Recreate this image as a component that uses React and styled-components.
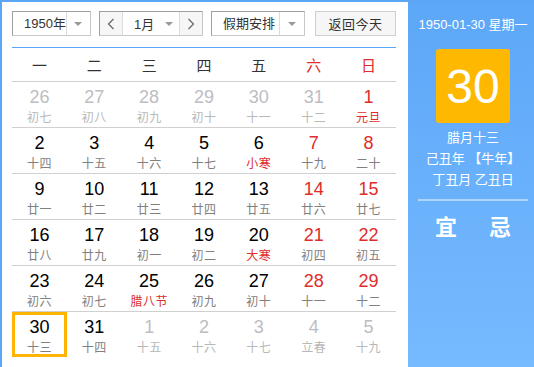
import React from "react";
import styled, { createGlobalStyle } from "styled-components";

const Global = createGlobalStyle`
  html, body { margin: 0; padding: 0; overflow: hidden; background: #fff; }
  body { font-family: "Liberation Sans", "Noto Sans CJK SC", sans-serif; }
`;

const Widget = styled.div`
  display: flex;
  width: 540px;
  height: 367px;
  border-top: 2px solid #5ca6f6;
  border-left: 2px solid #5ca6f6;
  box-sizing: border-box;
`;

const LeftPane = styled.div`
  width: 406px;
  flex: none;
  box-sizing: border-box;
  padding: 9px 12px 0 10px;
  background: #fff;
`;

const Toolbar = styled.div`
  display: flex;
  height: 25px;
  margin-bottom: 11px;
`;

const SelectBox = styled.div`
  display: flex;
  width: ${(p) => p.$w}px;
  margin-right: ${(p) => p.$mr || 0}px;
  height: 25px;
  box-sizing: border-box;
  border: 1px solid #c8c8c8;
  border-left-color: #a0a0a0;
  border-top-color: #a0a0a0;
  background: #fff;
  color: #333;
  font-size: 13px;
`;

const SelectText = styled.div`
  flex: 1;
  display: flex;
  align-items: center;
  padding-left: ${(p) => p.$pl}px;
  line-height: 23px;
  white-space: nowrap;
`;

const ArrowCell = styled.div`
  width: ${(p) => p.$w || 24}px;
  display: flex;
  align-items: center;
  justify-content: center;
  border-left: ${(p) => (p.$divider ? "1px solid #dcdcdc" : "none")};
`;

const Tri = styled.span`
  width: 0;
  height: 0;
  border-left: 4px solid transparent;
  border-right: 4px solid transparent;
  border-top: 4px solid #999;
`;

const NavBtn = styled.div`
  width: 22px;
  flex: none;
  display: flex;
  align-items: center;
  justify-content: center;
  background: #f6f6f6;
  border-right: ${(p) => (p.$side === "left" ? "1px solid #dcdcdc" : "none")};
  border-left: ${(p) => (p.$side === "right" ? "1px solid #dcdcdc" : "none")};
`;

const MonthText = styled.div`
  flex: 1;
  display: flex;
  align-items: center;
  padding-left: 11px;
`;

const MonthLabel = styled.span`
  flex: 1;
`;

const TodayBtn = styled.div`
  width: 81px;
  height: 25px;
  box-sizing: border-box;
  border: 1px solid #cfcfcf;
  background: #f6f6f6;
  color: #333;
  font-size: 13px;
  display: flex;
  align-items: center;
  justify-content: center;
  letter-spacing: 0.5px;
`;

const BlueLine = styled.div`
  height: 1px;
  background: #5ca6f6;
`;

const HeadRow = styled.div`
  display: grid;
  grid-template-columns: repeat(7, 1fr);
  height: 33px;
  border-bottom: 1px solid #d0d0d0;
`;

const HeadCell = styled.div`
  display: flex;
  align-items: center;
  justify-content: center;
  font-size: 15px;
  color: ${(p) => (p.$red ? "#e02c2c" : "#333")};
`;

const WeekRow = styled.div`
  display: grid;
  grid-template-columns: repeat(7, 1fr);
  height: 45px;
  border-bottom: ${(p) => (p.$last ? "none" : "1px solid #d0d0d0")};
`;

const DayCell = styled.div`
  display: flex;
  flex-direction: column;
  align-items: center;
  padding-top: 4px;
  box-sizing: border-box;
  box-shadow: ${(p) => (p.$selected ? "inset 0 0 0 3px #ffb400" : "none")};
`;

const DayNum = styled.div`
  font-family: "Liberation Sans", Arial, sans-serif;
  font-size: 18px;
  line-height: 22px;
  color: ${(p) => (p.$tone === "other" ? "#bdbdc2" : p.$tone === "red" ? "#e02c2c" : "#000")};
`;

const Lunar = styled.div`
  margin-top: 1px;
  font-family: "Noto Sans CJK SC", sans-serif;
  font-size: 12px;
  line-height: 16px;
  letter-spacing: 0.5px;
  color: ${(p) => (p.$tone === "other" ? "#b8b8b8" : p.$tone === "red" ? "#e02c2c" : "#808080")};
`;

const RightPane = styled.div`
  width: 130px;
  flex: none;
  background: linear-gradient(180deg, #5da7f8 0%, #76baff 100%);
  color: #fff;
  display: flex;
  flex-direction: column;
  align-items: center;
  padding-top: 14px;
  box-sizing: border-box;
`;

const DateLine = styled.div`
  font-size: 13px;
  line-height: 18px;
  white-space: nowrap;
`;

const BigBox = styled.div`
  margin-top: 15px;
  width: 74px;
  height: 74px;
  border-radius: 3px;
  background: #ffb800;
  display: flex;
  align-items: center;
  justify-content: center;
  font-family: "Liberation Sans", Arial, sans-serif;
  font-size: 48px;
  color: #fff;
`;

const InfoLines = styled.div`
  margin-top: 4px;
  display: flex;
  flex-direction: column;
  align-items: center;
  font-size: 13px;
  line-height: 21px;
  white-space: nowrap;
`;

const Sep = styled.div`
  margin-top: 9px;
  width: 110px;
  height: 2px;
  background: rgba(255, 255, 255, 0.45);
`;

const YiJi = styled.div`
  margin-top: 12px;
  display: flex;
  gap: 32px;
  font-size: 22px;
  line-height: 30px;
  font-weight: bold;
`;

const Chevron = ({ dir }) => (
  <svg width="8" height="12" viewBox="0 0 8 12">
    <polyline
      points={dir === "left" ? "6.5,1 1.5,6 6.5,11" : "1.5,1 6.5,6 1.5,11"}
      fill="none"
      stroke="#666"
      strokeWidth="1.2"
    />
  </svg>
);

const weeks = [
  [["26", "初七", "o"], ["27", "初八", "o"], ["28", "初九", "o"], ["29", "初十", "o"], ["30", "十一", "o"], ["31", "十二", "o"], ["1", "元旦", "r", "r"]],
  [["2", "十四"], ["3", "十五"], ["4", "十六"], ["5", "十七"], ["6", "小寒", "n", "r"], ["7", "十九", "r"], ["8", "二十", "r"]],
  [["9", "廿一"], ["10", "廿二"], ["11", "廿三"], ["12", "廿四"], ["13", "廿五"], ["14", "廿六", "r"], ["15", "廿七", "r"]],
  [["16", "廿八"], ["17", "廿九"], ["18", "初一"], ["19", "初二"], ["20", "大寒", "n", "r"], ["21", "初四", "r"], ["22", "初五", "r"]],
  [["23", "初六"], ["24", "初七"], ["25", "腊八节", "n", "r"], ["26", "初九"], ["27", "初十"], ["28", "十一", "r"], ["29", "十二", "r"]],
  [["30", "十三", "n", "n", true], ["31", "十四"], ["1", "十五", "o"], ["2", "十六", "o"], ["3", "十七", "o"], ["4", "立春", "o"], ["5", "十九", "o"]],
];

const toneOf = (c) => (c === "o" ? "other" : c === "r" ? "red" : "normal");

const heads = ["一", "二", "三", "四", "五", "六", "日"];

export default function App() {
  return (
    <>
      <Global />
      <Widget>
        <LeftPane>
          <Toolbar>
            <SelectBox $w={79} $mr={8}>
              <SelectText $pl={11}>1950年</SelectText>
              <ArrowCell $divider>
                <Tri />
              </ArrowCell>
            </SelectBox>
            <SelectBox $w={104} $mr={8}>
              <NavBtn $side="left">
                <Chevron dir="left" />
              </NavBtn>
              <MonthText>
                <MonthLabel>1月</MonthLabel>
                <ArrowCell $w={20}>
                  <Tri />
                </ArrowCell>
              </MonthText>
              <NavBtn $side="right">
                <Chevron dir="right" />
              </NavBtn>
            </SelectBox>
            <SelectBox $w={94} $mr={10}>
              <SelectText $pl={11}>假期安排</SelectText>
              <ArrowCell $divider>
                <Tri />
              </ArrowCell>
            </SelectBox>
            <TodayBtn>返回今天</TodayBtn>
          </Toolbar>
          <BlueLine />
          <HeadRow>
            {heads.map((h, i) => (
              <HeadCell key={h} $red={i >= 5}>
                {h}
              </HeadCell>
            ))}
          </HeadRow>
          {weeks.map((w, wi) => (
            <WeekRow key={wi} $last={wi === weeks.length - 1}>
              {w.map(([n, l, nc, lc, sel], di) => {
                const numTone = toneOf(nc);
                const lunTone = nc === "o" ? "other" : toneOf(lc);
                return (
                  <DayCell key={di} $selected={!!sel}>
                    <DayNum $tone={numTone}>{n}</DayNum>
                    <Lunar $tone={lunTone}>{l}</Lunar>
                  </DayCell>
                );
              })}
            </WeekRow>
          ))}
        </LeftPane>
        <RightPane>
          <DateLine>1950-01-30 星期一</DateLine>
          <BigBox>30</BigBox>
          <InfoLines>
            <span>腊月十三</span>
            <span>己丑年 【牛年】</span>
            <span>丁丑月 乙丑日</span>
          </InfoLines>
          <Sep />
          <YiJi>
            <span>宜</span>
            <span>忌</span>
          </YiJi>
        </RightPane>
      </Widget>
    </>
  );
}
